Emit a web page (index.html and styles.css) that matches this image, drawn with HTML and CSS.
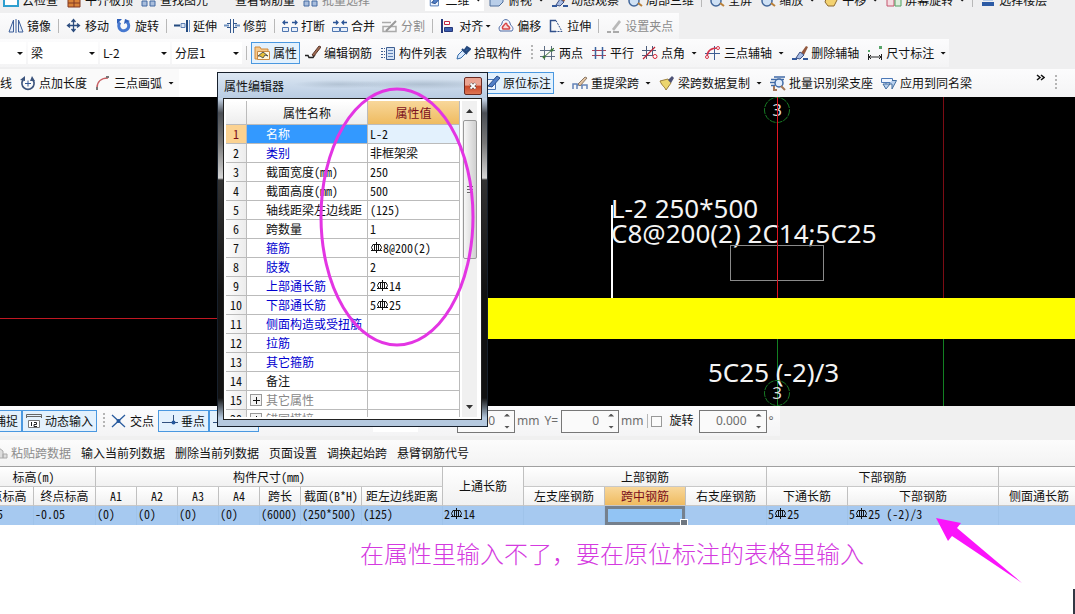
FILE: index.html
```html
<!DOCTYPE html>
<html lang="zh-CN">
<head>
<meta charset="utf-8">
<title>属性编辑器</title>
<link rel="stylesheet" href="styles.css">
</head>
<body>
<svg class="defs" aria-hidden="true">
  <symbol id="i-mirror" viewBox="0 0 16 16"><path d="M5.500 2v12H1zM10.500 2v12H15z" fill="#e8eef8" stroke="#3d5f9a"/><path d="M8 1v14" stroke="#3d5f9a"/></symbol>
  <symbol id="i-move" viewBox="0 0 16 16"><path d="M7.500 2v11M2 7.500h11M5.500 4l2-2.500 2 2.500M5.500 11l2 2.500 2-2.500M4 5.500l-2.500 2 2.500 2M11 5.500l2.500 2-2.500 2" fill="none" stroke="#2b4c7e" stroke-width="1.300"/></symbol>
  <symbol id="i-rotate" viewBox="0 0 16 16"><path d="M4 4.500a5 5 0 1 0 7-.5" fill="none" stroke="#4678d0" stroke-width="3"/><path d="M1 6V1h5zM8 6l1-5 5 2z" fill="#2f60bb"/></symbol>
  <symbol id="i-extend" viewBox="0 0 16 16"><path d="M0 7.500h6M13 2v12" stroke="#244b80" stroke-width="2"/><path d="M7 5.500h4v4H7z" fill="#dbe6f5" stroke="#5b7eb3"/><path d="M15.500 2v12" stroke="#6c93c8"/></symbol>
  <symbol id="i-trim" viewBox="0 0 16 16"><path d="M0 7.500h5M11 7.500h5" stroke="#6e91c0" stroke-width="2"/><path d="M6.500 1v14M9.500 1v14M3 5.500h3M10 5.500h3M3 9.500h3M10 9.500h3" stroke="#34598f"/></symbol>
  <symbol id="i-break" viewBox="0 0 16 16"><path d="M1 4.500h5M10 4.500h5M3 2.500l-2 2 2 2M13 2.500l2 2-2 2" fill="none" stroke="#2c5596" stroke-width="1.300"/><path d="M.5 9.500h6v4h-6zM9.500 9.500h6v4h-6z" fill="#e8effa" stroke="#4f76b0"/></symbol>
  <symbol id="i-merge" viewBox="0 0 16 16"><path d="M1 4.500h5M10 4.500h5M4 2.500l2 2-2 2M12 2.500l-2 2 2 2" fill="none" stroke="#2c5596" stroke-width="1.300"/><path d="M.5 9.500h7v4h-7zM8.500 9.500h7v4h-7z" fill="#e8effa" stroke="#4f76b0"/></symbol>
  <symbol id="i-split" viewBox="0 0 16 16"><path d="M0 4.500h9M1 8.500h13v5H1z" fill="none" stroke="#aaa" stroke-width="1.500"/><path d="M4 13L14 3" stroke="#999" stroke-width="2"/></symbol>
  <symbol id="i-align" viewBox="0 0 16 16"><path d="M2 1v14" stroke="#26387b" stroke-width="2"/><path d="M4.500 3.500h5v3h-5z" fill="#fff" stroke="#c22843"/><path d="M4.500 9.500h8v4h-8z" fill="#3b5cae" stroke="#26387b"/></symbol>
  <symbol id="i-offset" viewBox="0 0 16 16"><path d="M2 13c-3-5 2-5 2-8 1-5 7-4 8 0 0 3 5 4 2 8z" fill="#f5f6fb" stroke="#4d6aa5"/><path d="M5 11c-2-3 1-3 2-5 1-1 2-1 2 1 1 1 4 3 2 4z" fill="#f8dada" stroke="#d84545" stroke-width="1.500"/></symbol>
  <symbol id="i-stretch" viewBox="0 0 16 16"><path d="M8 2.500H2.500v11H8" fill="none" stroke="#31508a" stroke-width="1.500"/><path d="M8 2.500l6 11H8" fill="none" stroke="#31508a" stroke-dasharray="2 1"/></symbol>
  <symbol id="i-grip" viewBox="0 0 16 16"><path d="M6 11l7-9 2 2-7 9z" fill="#b9b9b9"/><path d="M1 14h4M7 14h6" stroke="#aaa" stroke-width="2"/></symbol>
  <symbol id="i-props" viewBox="0 0 16 16"><path d="M1 2h5l1 2h7v10H1z" fill="#f6c98c" stroke="#d18938"/><path d="M3.500 6.500h12v8h-12z" fill="#fff7df" stroke="#c98943"/><path d="M4 11l5-4 5 4-3-1-2 3-3-2z" fill="#e5bf38" stroke="#555"/></symbol>
  <symbol id="i-edit" viewBox="0 0 16 16"><path d="M0 10.500h3l1 2h4l2-3" fill="none" stroke="#222" stroke-width="1.500"/><path d="M7 10l7-9 2 1-7 9z" fill="#a26b52" stroke="#58372b"/></symbol>
  <symbol id="i-list" viewBox="0 0 16 16"><path d="M6.500 2.500h8v12h-8z" fill="#d5e3f5" stroke="#3e5e91"/><path d="M8 5.500h5M8 8.500h5M8 11.500h5" stroke="#5e80b5"/><path d="M1 3.500h4M1 6.500h4M1 9.500h4M1 12.500h4" stroke="#3e5e91" stroke-dasharray="2 1"/></symbol>
  <symbol id="i-pick" viewBox="0 0 16 16"><path d="M2 14l1-4 5-5 3 3-5 5z" fill="#d9eaff" stroke="#356ba8"/><path d="M7 4l5 5M9 6l3-4 3 2-4 4z" fill="#2f5e9e" stroke="#24487d" stroke-width="2"/></symbol>
  <symbol id="i-two" viewBox="0 0 16 16"><path d="M0 5.500h15M0 11.500h15M4.500 1v14M11.500 1v14" stroke="#5d6d83"/><path d="M3 13L14 3" stroke="#3c6d3b"/><circle cx="4" cy="12" r="1.500" fill="#3e7a39"/><circle cx="12" cy="5" r="1.500" fill="#3e7a39"/></symbol>
  <symbol id="i-parallel" viewBox="0 0 16 16"><path d="M1 5.500h14M1 10.500h14" stroke="#ad4053"/><path d="M4.500 2v12M11.500 2v12" stroke="#3b63a0" stroke-width="1.500"/></symbol>
  <symbol id="i-angle" viewBox="0 0 16 16"><path d="M0 5.500h14M0 10.500h11M4.500 1v13M10.500 1v9" stroke="#4c5d7c"/><path d="M1 14L13 2" stroke="#c02638" stroke-width="1.300"/><circle cx="13" cy="11.500" r="2" fill="#fff" stroke="#d42435"/></symbol>
  <symbol id="i-three" viewBox="0 0 16 16"><path d="M0 8.500h15M9.500 1v14" stroke="#3d5e94"/><path d="M2 12c0-5 3-9 11-9" fill="none" stroke="#d5344b" stroke-width="1.500"/><circle cx="2" cy="12" r="1.500" fill="#fff" stroke="#d5344b"/><circle cx="13" cy="3" r="1.500" fill="#fff" stroke="#d5344b"/></symbol>
  <symbol id="i-brush" viewBox="0 0 16 16"><path d="M9 8l5-7 2 1-4 8z" fill="#92573d"/><path d="M4 13l4-6 4 3-4 4z" fill="#a7bce4" stroke="#3e4f80"/><path d="M0 14h5M11 14h5" stroke="#34599b" stroke-width="2"/></symbol>
  <symbol id="i-dim" viewBox="0 0 16 16"><path d="M1.500 9v6M14.500 9v6M2 12h12M4 10l-2 2 2 2M12 10l2 2-2 2" fill="none" stroke="#222"/><path d="M1 5h2v2H1zM12 1h3v3h-3z" fill="#58a56a"/></symbol>
  <symbol id="i-length" viewBox="0 0 16 16"><path d="M3 5a6 6 0 1 0 10 0" fill="none" stroke="#3c547d" stroke-width="1.800"/><path d="M0 5l5-4v5zM12 1l3 5h-5z" fill="#3c547d"/><path d="M5 8.500h6M8 5.500v6" stroke="#355994"/></symbol>
  <symbol id="i-arc" viewBox="0 0 16 16"><path d="M2 13C2 7 6 3 13 3" fill="none" stroke="#c76064" stroke-width="1.500"/><path d="M1 12h2v3H1zM11 1h3v2h-3z" fill="#777"/></symbol>
  <symbol id="i-mark" viewBox="0 0 16 16"><path d="M2.500 4.500h9v10h-9z" fill="#eef4fd" stroke="#4571b2"/><path d="M4 11l9-10 3 2-8 9z" fill="#527fc8" stroke="#244b88"/></symbol>
  <symbol id="i-respan" viewBox="0 0 16 16"><path d="M1 14V9h4v5M5 10h5v4M10 10h5v4" fill="none" stroke="#6484b8" stroke-width="1.500"/><path d="M6 9l7-7 2 1-7 8z" fill="#e3c4a3" stroke="#8c7967"/></symbol>
  <symbol id="i-copyspan" viewBox="0 0 16 16"><path d="M1 6l8-2 3 4-5 7c-1-3-4-4-6-9z" fill="#ecd66f" stroke="#9b803d"/><path d="M9 5l4-4 2 2-3 5z" fill="#4e5276"/></symbol>
  <symbol id="i-batch" viewBox="0 0 16 16"><path d="M1 4.500h13M0 7.500h5M1 10.500h4M4 2h11" stroke="#416ba8" stroke-width="1.500"/><circle cx="9" cy="8" r="4" fill="#dfecfc" stroke="#3f69a5" stroke-width="1.500"/><path d="M11 11l4 4M4 11v4h3" fill="none" stroke="#a47758" stroke-width="2"/></symbol>
  <symbol id="i-apply" viewBox="0 0 16 16"><path d="M.5 3.500h11v4H.5zM5 8v4" fill="#eef5ff" stroke="#4b78b6"/><path d="M2 9l3 5 4-5zM11 5.500h4.500L11 14V9H8" fill="#b8d0ee" stroke="#416d9f"/></symbol>
  <symbol id="i-dyn" viewBox="0 0 16 16"><path d="M.5 5V1.500h15V5M1 3.500h14" fill="none" stroke="#666"/><path d="M2.500 7.500h11v7h-11z" fill="#fff" stroke="#777"/><path d="M5.500 9v4M8 9.500h2.500v2H8v2h3" fill="none" stroke="#222"/></symbol>
  <symbol id="i-cross" viewBox="0 0 16 16"><path d="M1 2l13 12M14 2L1 14" stroke="#2a5c9f" stroke-width="1.300"/><circle cx="7.500" cy="8" r="2" fill="#24579c"/></symbol>
  <symbol id="i-perp" viewBox="0 0 16 16"><path d="M0 9.500h16M11.500 2v8" stroke="#31517f"/><circle cx="11.500" cy="9.500" r="2" fill="#24579c"/></symbol>
  <symbol id="i-paste" viewBox="0 0 16 16"><path d="M3 6l4-3 4 3v7H3zM11 9h4v4h-4z" fill="#ddd" stroke="#aaa"/></symbol>
  <symbol id="i-blue" viewBox="0 0 16 16"><path d="M1 4h14v10H1z" fill="#fff" stroke="#2f9fcf" stroke-width="2"/></symbol>
  <symbol id="i-brick" viewBox="0 0 16 16"><path d="M2 3h12v12H2z" fill="#d98238" stroke="#813922"/><path d="M2 11h12M8 5v10" stroke="#813922"/></symbol>
  <symbol id="i-find" viewBox="0 0 16 16"><path d="M1 9h5v5H1zM9 9h5v5H9z" fill="#a9bedd" stroke="#456aa2"/></symbol>
  <symbol id="i-lens" viewBox="0 0 16 16"><circle cx="7" cy="9" r="5" fill="#cfe1f5" stroke="#42679b" stroke-width="1.500"/><path d="M11 11l4 3" stroke="#ba8038" stroke-width="2"/></symbol>
  <symbol id="i-cube" viewBox="0 0 16 16"><path d="M1 7l4-3h9v6l-4 4H1z" fill="#b9cee9" stroke="#4e6f9c"/></symbol>
  <symbol id="i-hand" viewBox="0 0 16 16"><path d="M4 4h8l2 4-3 6H5l-3-4z" fill="#f3d271" stroke="#8e6b30"/></symbol>
  <symbol id="i-turn" viewBox="0 0 16 16"><path d="M1 3h7v11H1z" fill="#f5dce2" stroke="#c4546c"/><path d="M9 5h6v9H9z" fill="#dcefdc" stroke="#52a060"/></symbol>
  <symbol id="i-floor" viewBox="0 0 16 16"><path d="M3 4h10v5H3z" fill="#b9cee9"/><path d="M2 10h12v4H2z" fill="#2c5ba5"/></symbol>
  <symbol id="i-rebar" viewBox="0 0 12 12"><path d="M6.500 0v11M3 2.500h7M3 2.500q-3 3 0 6M10 2.500q3 3 0 6M4.500 3v6M8.500 3v6M1 8.500h11" fill="none" stroke="#111"/></symbol>
</svg>

<div class="app">
  <header class="toolbars">
    <div class="row row-top">
      <div class="strip grow">
        <button class="tool"><svg><use href="#i-blue"/></svg>云检查</button>
        <button class="tool"><svg><use href="#i-brick"/></svg>平齐板顶</button>
        <button class="tool"><svg><use href="#i-find"/></svg>查找图元</button>
        <button class="tool"><svg></svg>查看钢筋量</button>
        <button class="tool off"><svg><use href="#i-find"/></svg>批量选择</button>
        <span class="view-gap"></span>
        <button class="tool view-mode"><svg><use href="#i-mark"/></svg>二维<i class="caret far"></i></button>
        <button class="tool"><svg><use href="#i-cube"/></svg>俯视<i class="caret far"></i></button>
        <button class="tool"><svg><use href="#i-brush"/></svg>动态观察</button>
        <button class="tool"><svg><use href="#i-lens"/></svg>局部三维</button>
        <span class="sep"></span>
        <button class="tool"><svg><use href="#i-lens"/></svg>全屏</button>
        <button class="tool"><svg><use href="#i-lens"/></svg>缩放<i class="caret far"></i></button>
        <button class="tool"><svg><use href="#i-hand"/></svg>平移<i class="caret far"></i></button>
        <button class="tool"><svg><use href="#i-turn"/></svg>屏幕旋转<i class="caret far"></i></button>
        <span class="sep"></span>
        <button class="tool"><svg><use href="#i-floor"/></svg>选择楼层</button>
      </div>
    </div>

    <div class="row row-edit">
      <div class="strip tight">
        <button class="tool"><svg><use href="#i-mirror"/></svg>镜像</button>
        <span class="sep"></span>
        <button class="tool"><svg><use href="#i-move"/></svg>移动</button>
        <button class="tool"><svg><use href="#i-rotate"/></svg>旋转</button>
        <span class="sep"></span>
        <button class="tool"><svg><use href="#i-extend"/></svg>延伸</button>
        <button class="tool"><svg><use href="#i-trim"/></svg>修剪</button>
        <span class="sep"></span>
        <button class="tool"><svg><use href="#i-break"/></svg>打断</button>
        <button class="tool"><svg><use href="#i-merge"/></svg>合并</button>
        <button class="tool off"><svg><use href="#i-split"/></svg>分割</button>
        <span class="sep"></span>
        <button class="tool"><svg><use href="#i-align"/></svg>对齐<i class="caret"></i></button>
        <button class="tool"><svg><use href="#i-offset"/></svg>偏移</button>
        <button class="tool"><svg><use href="#i-stretch"/></svg>拉伸</button>
        <span class="sep"></span>
        <button class="tool off"><svg><use href="#i-grip"/></svg>设置夹点</button>
      </div>
    </div>

    <div class="row">
      <div class="strip">
        <span class="drop first"></span>
        <label class="drop"><select aria-label="构件类型"><option>梁</option></select></label>
        <label class="drop"><select aria-label="构件名称"><option>L-2</option></select></label>
        <label class="drop"><select aria-label="分层"><option>分层1</option></select></label>
        <span class="sep"></span>
        <button class="tool on"><svg><use href="#i-props"/></svg>属性</button>
        <button class="tool"><svg><use href="#i-edit"/></svg>编辑钢筋</button>
        <button class="tool"><svg><use href="#i-list"/></svg>构件列表</button>
        <button class="tool"><svg><use href="#i-pick"/></svg>拾取构件</button>
        <span class="handle"></span>
        <button class="tool"><svg><use href="#i-two"/></svg>两点</button>
        <button class="tool"><svg><use href="#i-parallel"/></svg>平行</button>
        <button class="tool"><svg><use href="#i-angle"/></svg>点角<i class="caret far"></i></button>
        <button class="tool"><svg><use href="#i-three"/></svg>三点辅轴<i class="caret far"></i></button>
        <button class="tool"><svg><use href="#i-brush"/></svg>删除辅轴</button>
        <button class="tool"><svg><use href="#i-dim"/></svg>尺寸标注<i class="caret far"></i></button>
      </div>
    </div>

    <div class="row row-draw">
      <div class="strip draw">
        <button class="tool flush">线</button>
        <button class="tool"><svg><use href="#i-length"/></svg>点加长度</button>
        <button class="tool"><svg><use href="#i-arc"/></svg>三点画弧<i class="caret far"></i></button>
      </div>
      <div class="strip grow">
        <button class="tool on"><svg><use href="#i-mark"/></svg>原位标注</button>
        <i class="caret alone"></i>
        <button class="tool"><svg><use href="#i-respan"/></svg>重提梁跨<i class="caret far"></i></button>
        <button class="tool"><svg><use href="#i-copyspan"/></svg>梁跨数据复制<i class="caret far"></i></button>
        <button class="tool"><svg><use href="#i-batch"/></svg>批量识别梁支座</button>
        <button class="tool"><svg><use href="#i-apply"/></svg>应用到同名梁</button>
        <button class="more" aria-label="更多"><svg viewBox="0 0 9 7"><path d="M1 1l3 2.500L1 6M5 1l3 2.500L5 6" fill="none" stroke="#111" stroke-width="1.500"/></svg></button>
        <span class="handle end"></span>
      </div>
    </div>
  </header>

  <main class="canvas">
    <svg class="drawing" role="img" aria-label="梁平面图">
      <rect x="0" y="221" width="217" height="1" fill="#c01822"/>
      <rect x="943" y="0" width="1" height="201" fill="#7c0c14"/>
      <rect x="943" y="242" width="1" height="67" fill="#128022"/>
      <rect x="777" y="242" width="1" height="67" fill="#128022"/>
      <rect x="611" y="108" width="2" height="93" fill="#fff"/>
      <text class="cad" x="611" y="121">L-2 250*500</text>
      <text class="cad" x="611" y="146">C8@200(2) 2C14;5C25</text>
      <rect x="730.500" y="148.500" width="93" height="35" fill="none" stroke="#8a8a8a"/>
      <rect x="488" y="201" width="100%" height="41" fill="#ff0"/>
      <text class="cad" x="708" y="285">5C25 (-2)/3</text>
      <circle cx="777" cy="13" r="12.500" class="axis"/>
      <circle cx="777" cy="296" r="12.500" class="axis"/>
      <text class="axis-no" x="777" y="19">3</text>
      <text class="axis-no" x="777" y="302">3</text>
      <rect x="777" y="0" width="1" height="201" fill="#e01420"/>
    </svg>
  </main>

  <section class="status">
    <div class="strip snap">
      <button class="tool on flush">捕捉</button>
      <button class="tool on"><svg><use href="#i-dyn"/></svg>动态输入</button>
      <span class="handle"></span>
      <button class="tool"><svg><use href="#i-cross"/></svg>交点</button>
      <button class="tool on"><svg><use href="#i-perp"/></svg>垂点</button>
      <button class="tool on blank" aria-label="中点"><svg><use href="#i-perp"/></svg></button>
    </div>
    <div class="strip coords">
      <span class="combo"></span>
      <span class="num"><input aria-label="X" value="0"><i class="spin"></i></span>
      <span class="unit">mm</span>
      <label class="unit y" for="y">Y=</label>
      <span class="num"><input id="y" value="0"><i class="spin"></i></span>
      <span class="unit">mm</span>
      <span class="sep"></span>
      <label class="rot"><input type="checkbox">旋转</label>
      <span class="num wide"><input aria-label="旋转角度" value="0.000"><i class="spin"></i></span>
      <span class="unit">°</span>
    </div>
  </section>

  <section class="sheet">
    <nav class="sheet-bar">
      <button class="cmd off"><svg><use href="#i-paste"/></svg>粘贴跨数据</button>
      <button class="cmd">输入当前列数据</button>
      <button class="cmd">删除当前列数据</button>
      <button class="cmd">页面设置</button>
      <button class="cmd">调换起始跨</button>
      <button class="cmd">悬臂钢筋代号</button>
    </nav>
    <div class="sheet-scroll">
      <table class="spans">
        <colgroup>
          <col class="w62"><col class="w62"><col class="w41"><col class="w41"><col class="w41"><col class="w41"><col class="w41"><col class="w61"><col class="w81"><col class="w81"><col class="w81"><col class="w81"><col class="w81"><col class="w81"><col class="w150"><col class="w81">
        </colgroup>
        <thead>
          <tr><th colspan="2">标高(m)</th><th colspan="7">构件尺寸(mm)</th><th rowspan="2">上通长筋</th><th colspan="3">上部钢筋</th><th colspan="2">下部钢筋</th><th></th></tr>
          <tr><th>起点标高</th><th>终点标高</th><th>A1</th><th>A2</th><th>A3</th><th>A4</th><th>跨长</th><th>截面(B*H)</th><th>距左边线距离</th><th>左支座钢筋</th><th class="current">跨中钢筋</th><th>右支座钢筋</th><th>下通长筋</th><th>下部钢筋</th><th>侧面通长筋</th></tr>
        </thead>
        <tbody>
          <tr><td>-0.05</td><td>-0.05</td><td>(0)</td><td>(0)</td><td>(0)</td><td>(0)</td><td>(6000)</td><td>(250*500)</td><td>(125)</td><td>2<svg class="rebar"><use href="#i-rebar"/></svg>14</td><td></td><td class="picked"></td><td></td><td>5<svg class="rebar"><use href="#i-rebar"/></svg>25</td><td>5<svg class="rebar"><use href="#i-rebar"/></svg>25 (-2)/3</td><td></td></tr>
        </tbody>
      </table>
    </div>
    <p class="note">在属性里输入不了，要在原位标注的表格里输入</p>
  </section>

  <section class="dialog" role="dialog" aria-labelledby="dlg">
    <div class="dialog-title"><h1 id="dlg">属性编辑器</h1><button class="close" aria-label="关闭"><svg viewBox="0 0 8 8"><path d="M1.500 1.500l5 5M6.500 1.500l-5 5" stroke="#444" stroke-width="3"/><path d="M1.500 1.500l5 5M6.500 1.500l-5 5" stroke="#fff" stroke-width="1.800"/></svg></button></div>
    <div class="dialog-body">
      <div class="props-clip">
        <table class="props">
          <colgroup><col class="c-no"><col><col class="c-val"></colgroup>
          <thead><tr><th></th><th>属性名称</th><th class="current">属性值</th></tr></thead>
          <tbody>
            <tr class="sel"><th>1</th><td>名称</td><td>L-2</td></tr>
            <tr class="blue"><th>2</th><td>类别</td><td>非框架梁</td></tr>
            <tr><th>3</th><td>截面宽度(mm)</td><td>250</td></tr>
            <tr><th>4</th><td>截面高度(mm)</td><td>500</td></tr>
            <tr><th>5</th><td>轴线距梁左边线距</td><td>(125)</td></tr>
            <tr><th>6</th><td>跨数量</td><td>1</td></tr>
            <tr class="blue"><th>7</th><td>箍筋</td><td><svg class="rebar"><use href="#i-rebar"/></svg>8@200(2)</td></tr>
            <tr class="blue"><th>8</th><td>肢数</td><td>2</td></tr>
            <tr class="blue"><th>9</th><td>上部通长筋</td><td>2<svg class="rebar"><use href="#i-rebar"/></svg>14</td></tr>
            <tr class="blue"><th>10</th><td>下部通长筋</td><td>5<svg class="rebar"><use href="#i-rebar"/></svg>25</td></tr>
            <tr class="blue"><th>11</th><td>侧面构造或受扭筋</td><td></td></tr>
            <tr class="blue"><th>12</th><td>拉筋</td><td></td></tr>
            <tr class="blue"><th>13</th><td>其它箍筋</td><td></td></tr>
            <tr><th>14</th><td>备注</td><td></td></tr>
            <tr class="group"><th>15</th><td><button class="plus" aria-label="展开"></button>其它属性</td><td></td></tr>
            <tr class="group"><th>20</th><td><button class="plus" aria-label="展开"></button>锚固搭接</td><td></td></tr>
          </tbody>
        </table>
      </div>
      <div class="scroll"><i class="up"></i><span class="thumb"></span><i class="down"></i></div>
    </div>
  </section>

  <svg class="ring" viewBox="0 0 160 262" aria-hidden="true"><ellipse cx="80" cy="131" rx="76" ry="128" fill="none" stroke="#e335e3" stroke-width="3"/></svg>
  <svg class="arrow" viewBox="0 0 88 67" aria-hidden="true"><path d="M1 1l25 5-4 5 65 55-70-47-4 5z" fill="#fb14fb"/></svg>
  <span class="edge"></span>
</div>
</body>
</html>
```
FILE: styles.css
```css
* { box-sizing: border-box; }
body {
  margin: 0;
  background: #fff;
  color: #111;
  font: 12px/16px "Noto Sans", "Noto Sans CJK SC", sans-serif;
}
button, input, select { font: inherit; color: inherit; }
button { border: 0; background: none; padding: 0; white-space: nowrap; }
.defs { display: none; }
.app {
  position: relative;
  min-height: 100vh;
  overflow: hidden;
  display: flex;
  flex-direction: column;
}

/* toolbars */
.toolbars { background: #efeff0; }
.row { display: flex; height: 28px; }
.row-top { margin-top: -13px; height: 26px; }
.row-edit { height: 26px; }
.row-draw { height: 30px; padding-top: 2px; }
.strip {
  display: flex;
  align-items: center;
  gap: 2px;
  background: linear-gradient(#fcfcfd, #f4f4f5);
  font-family: "Noto Sans CJK SC", sans-serif;
}
.grow { flex: 1; }
.row-top .strip { background: none; }
.tight { gap: 1px; padding: 0 3px 0 5px; }
.tool {
  display: flex;
  align-items: center;
  gap: 3px;
  height: 22px;
  padding: 0 2px;
  border: 1px solid transparent;
  flex: none;
}
.tool svg { width: 16px; height: 16px; }
.on { border-color: #4a98e0; background: #e3f1fd; }
.off { color: #8c8c8c; }
.flush { padding-left: 0; border-left: 0; }
.caret {
  width: 6px;
  height: 3px;
  background: #111;
  clip-path: polygon(0 0, 100% 0, 50% 100%);
  margin-left: -1px;
}
.caret.far { margin-left: 3px; }
.caret.alone { margin: 0 2px 0 3px; }
.sep { width: 1px; height: 14px; margin: 0 2px; background: #b8b8b8; flex: none; }
.tight .sep { margin: 0 3px; }
.handle {
  width: 2px;
  height: 16px;
  margin: 0 2px 0 4px;
  flex: none;
  background: repeating-linear-gradient(#b5b5b5 0 2px, transparent 2px 4px);
}
.view-gap { width: 48px; }
.view-mode { width: 59px; background: #fff; }
.drop { position: relative; width: 70px; height: 22px; background: #fff; }
.drop::after {
  content: "";
  position: absolute;
  right: 3px;
  top: 10px;
  width: 6px;
  height: 3px;
  background: #111;
  clip-path: polygon(0 0, 100% 0, 50% 100%);
}
.drop.first { width: 26px; }
.drop select {
  appearance: none;
  width: 100%;
  height: 22px;
  border: 0;
  padding: 0 3px;
  background: none;
}
.draw { width: 217px; background: linear-gradient(90deg, #fafafa 179px, #fff 179px); }
.draw + .strip { padding-left: 264px; }
.more { margin-left: auto; padding: 0 8px 12px; }
.more svg { width: 9px; height: 7px; display: block; }
.handle.end { margin: 0 18px 0 0; }

/* drawing area */
.canvas { background: #000; height: 309px; }
.drawing { display: block; width: 100%; height: 100%; }
.cad { font: 26px "Noto Sans", sans-serif; fill: #f4f4f4; }
.axis { fill: none; stroke: #177a24; stroke-dasharray: 6 1; }
.axis-no { font: 17px "Noto Sans", sans-serif; fill: #ddd; text-anchor: middle; }

/* status bar */
.status { display: flex; background: #f0f0f0; height: 34px; padding-bottom: 4px; }
.status .strip { height: 30px; }
.snap { gap: 0; width: 373px; flex: none; }
.snap .handle { margin: 0 2px 0 6px; }
.snap .flush { width: 22px; justify-content: flex-end; overflow: hidden; }
.snap .tool { padding: 0 3px; }
.snap .blank { width: 50px; }
.coords { padding-right: 6px; color: #6d6d6d; font-family: "Noto Sans", "Noto Sans CJK SC", sans-serif; }
.combo { width: 45px; height: 22px; background: #fff; margin-right: 37px; }
.num {
  display: flex;
  align-items: center;
  width: 58px;
  height: 23px;
  border: 1px solid #777;
  background: #fafafa;
  padding-right: 4px;
}
.num.wide { width: 68px; }
.num input { width: 100%; min-width: 0; border: 0; padding: 0 9px 0 0; background: none; text-align: right; }
.spin { display: flex; flex-direction: column; gap: 9px; flex: none; }
.spin::before, .spin::after { content: ""; width: 6px; height: 3px; background: #555; clip-path: polygon(50% 0, 100% 100%, 0 100%); }
.spin::after { clip-path: polygon(0 0, 100% 0, 50% 100%); }
.unit.y { margin: 0 1px 0 3px; }
.rot { display: flex; align-items: center; gap: 8px; color: #111; margin-right: 3px; }
.rot input { appearance: none; width: 11px; height: 11px; margin: 0; border: 1px solid #999; background: #fbfbfb; }
.coords .sep { margin: 0 1px; }

/* span table */
.sheet { flex: 1; background: #fff; }
.sheet-bar {
  display: flex;
  align-items: center;
  gap: 10px;
  height: 27px;
  background: linear-gradient(#fcfcfc, #f3f3f3);
  border-bottom: 1px solid #a0a0a0;
  font-family: "Noto Sans CJK SC", sans-serif;
}
.cmd { display: flex; align-items: center; gap: 3px; flex: none; }
.cmd svg { width: 16px; height: 16px; margin-left: -8px; }
.sheet-scroll { overflow: hidden; }
.spans, .props {
  table-layout: fixed;
  border-collapse: separate;
  border-spacing: 0;
  font-family: "Noto Sans Mono CJK SC", "Noto Sans CJK SC", monospace;
}
.spans { width: 1107px; margin-left: -28px; }
.w41 { width: 41px; }
.w61 { width: 61px; }
.w62 { width: 62px; }
.w81 { width: 81px; }
.w150 { width: 151px; }
.spans th {
  height: 20px;
  padding: 0;
  font-weight: 400;
  line-height: 16px;
  white-space: nowrap;
  background: linear-gradient(#fff, #f1f1f1);
  border-right: 1px solid #c0c0c0;
  border-bottom: 1px solid #c8c8c8;
}
.spans tr + tr th { height: 19px; }
.spans .current, .props .current { background: linear-gradient(#f8d79a, #efbb60); color: #7a0f1c; }
.spans td {
  height: 19px;
  padding: 0 2px 0 1px;
  line-height: 16px;
  vertical-align: top;
  white-space: nowrap;
  background: #a6c9f0;
  border-right: 1px solid #9fc3ea;
}
.spans .picked { position: relative; background: #92c4f4; box-shadow: inset 0 0 0 3px #75808d; }
.picked::after {
  content: "";
  position: absolute;
  right: -3px;
  bottom: -2px;
  width: 6px;
  height: 6px;
  background: #6f7780;
  border: 1px solid #fff;
}
.rebar { width: 12px; height: 12px; margin: 0 1px 0 0; vertical-align: -1px; }
.note {
  margin: 12px 0 0 360px;
  font: 300 24px/32px "Noto Sans CJK SC", sans-serif;
  color: #d43ae0;
  white-space: nowrap;
}

/* floating property editor */
.dialog {
  position: absolute;
  left: 217px;
  top: 72px;
  width: 271px;
  height: 355px;
  padding: 0 5px 6px;
  display: flex;
  flex-direction: column;
  border: 1px solid #17202c;
  background: linear-gradient(#c5d4e6 0 26px, #4b4f55 40px, #777 70px, #d6d6d6 105px, #333 107px, #111 220px, #111 325px, #b5c9df 345px);
}
.dialog-title {
  display: flex;
  align-items: center;
  justify-content: space-between;
  height: 25px;
  margin: 0 -5px;
  padding: 0 5px 0 6px;
  background:
    radial-gradient(ellipse at 45% 45%, #9aabbd80, transparent 22%),
    radial-gradient(ellipse at 76% 45%, #9aabbd90, transparent 26%),
    linear-gradient(#dce7f3, #b9cce2);
}
.dialog-title h1 { margin: 0; font: 12px/16px "Noto Sans CJK SC", sans-serif; }
.close {
  width: 18px;
  height: 18px;
  border: 1px solid #6b2a22;
  border-radius: 2px;
  background: linear-gradient(#eba492 0 45%, #cb4628 50%, #dd7553);
}
.close svg { width: 8px; height: 8px; display: block; margin: 0 auto; }
.dialog-body {
  flex: 1;
  min-height: 0;
  display: flex;
  gap: 2px;
  padding: 2px 4px 2px 2px;
  border: 1px solid #222;
  background: #fff;
}
.props-clip { flex: 1; overflow: hidden; }
.props { width: 100%; }
.c-no { width: 21px; }
.c-val { width: 92px; }
.props th {
  padding: 0;
  font-weight: 400;
  background: linear-gradient(90deg, #fdfdfd, #ececec);
  border-right: 1px solid #bbb;
  border-bottom: 1px solid #bbb;
}
.props thead th { height: 24px; background: linear-gradient(#fff, #ededed); }
.props td {
  position: relative;
  height: 19px;
  padding: 0 0 0 19px;
  line-height: 16px;
  white-space: nowrap;
  border-right: 1px solid #bbb;
  border-bottom: 1px solid #bbb;
}
.props tbody th { height: 19px; line-height: 16px; }
.props td:last-child { padding-left: 2px; }
.props .blue td:nth-child(2) { color: #0000d0; }
.props .group td { color: #888; }
.props .sel th { background: #fbd291; color: #7a0f1c; }
.props .sel td { background: #e3f1fd; }
.props .sel td:nth-child(2) { background: #3399ff; color: #fff; }
.plus {
  position: absolute;
  left: 3px;
  top: 3px;
  width: 12px;
  height: 12px;
  border: 1px solid #999;
  background:
    linear-gradient(#111, #111) center / 7px 1px no-repeat,
    linear-gradient(#111, #111) center / 1px 7px no-repeat,
    #f4f4f4;
}
.scroll {
  width: 15px;
  display: flex;
  flex-direction: column;
  align-items: center;
  background: #f0f0f0;
}
.scroll i { width: 7px; height: 4px; background: #333; clip-path: polygon(0 0, 100% 0, 50% 100%); }
.scroll .up { margin: 8px 0 7px; clip-path: polygon(50% 0, 100% 100%, 0 100%); }
.scroll .down { margin: auto 0 8px; }
.thumb {
  width: 14px;
  height: 139px;
  border: 1px solid #999;
  border-radius: 2px;
  background:
    repeating-linear-gradient(#666 0 1px, #eee 1px 3px) center / 6px 8px no-repeat,
    linear-gradient(90deg, #f7f7f7, #cfcfcf);
}

/* annotations */
.ring { position: absolute; left: 317px; top: 86px; width: 160px; height: 262px; pointer-events: none; }
.arrow { position: absolute; left: 935px; top: 517px; width: 88px; height: 67px; pointer-events: none; }
.edge { position: absolute; right: 0; bottom: 0; width: 2px; height: 25px; background: #333844; }
```
